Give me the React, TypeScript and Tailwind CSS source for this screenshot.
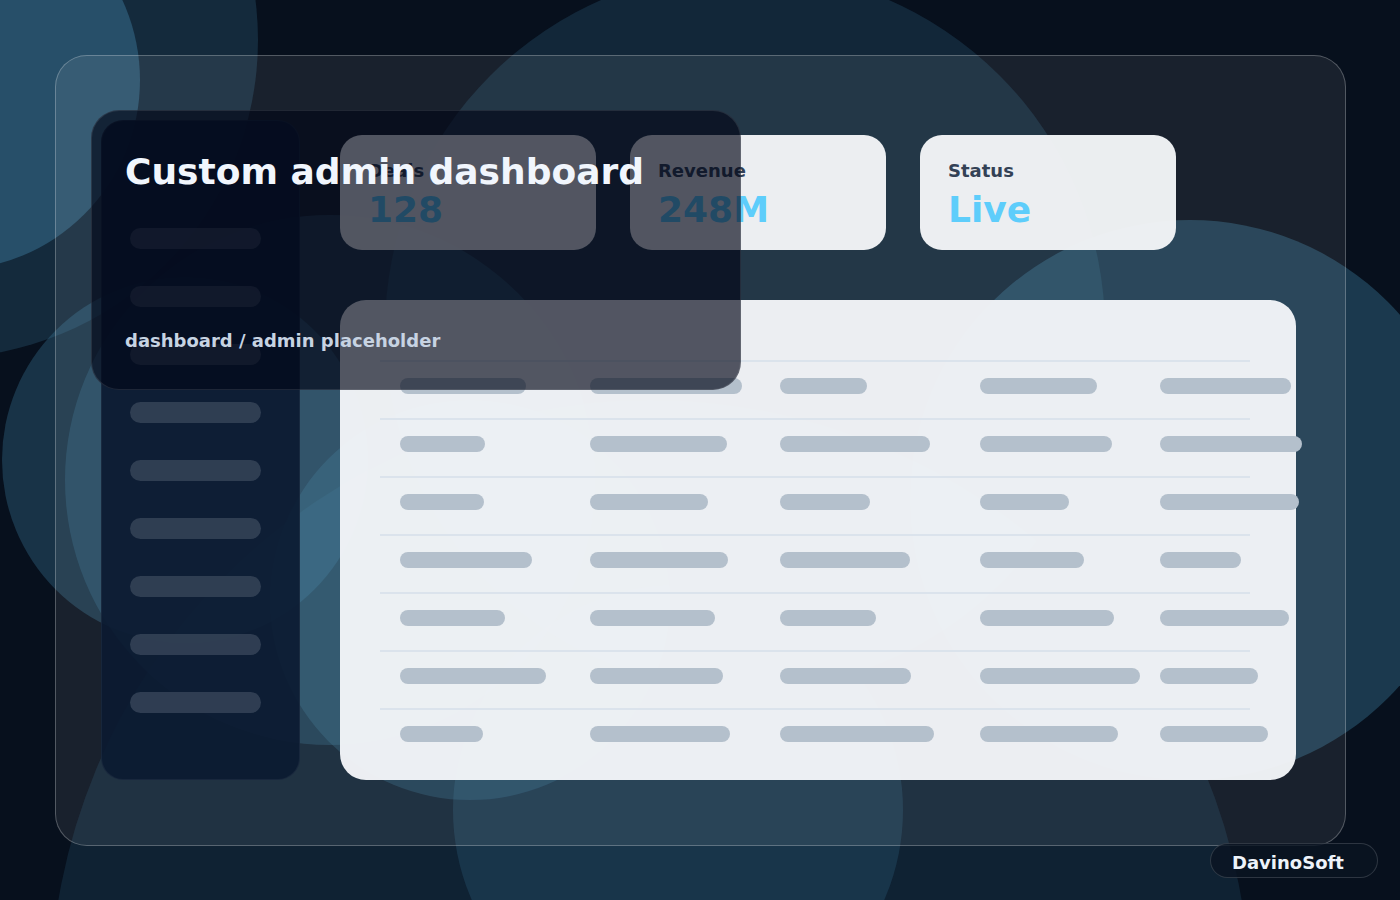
import React from 'react'

const font = { fontFamily: '"DejaVu Sans", "Liberation Sans", sans-serif' }

const stats = [
  { label: 'Deals', value: '128' },
  { label: 'Revenue', value: '248M' },
  { label: 'Status', value: 'Live' },
]

// widths of the skeleton bars, one array per row, five columns
const rows = [
  [126, 152, 87, 117, 131],
  [85, 137, 150, 132, 142],
  [84, 118, 90, 89, 139],
  [132, 138, 130, 104, 81],
  [105, 125, 96, 134, 129],
  [146, 133, 131, 160, 98],
  [83, 140, 154, 138, 108],
]

const blobs = [
  { cx: 650, cy: 1000, r: 600, o: 0.17 },
  { cx: -60, cy: 40, r: 318, o: 0.24 },
  { cx: -50, cy: 80, r: 190, o: 0.45 },
  { cx: 745, cy: 330, r: 360, o: 0.22 },
  { cx: 1190, cy: 500, r: 280, o: 0.38 },
  { cx: 185, cy: 460, r: 183, o: 0.33 },
  { cx: 330, cy: 480, r: 265, o: 0.28 },
  { cx: 470, cy: 600, r: 200, o: 0.28 },
  { cx: 678, cy: 810, r: 225, o: 0.22 },
]

function Backdrop() {
  return (
    <svg className="absolute inset-0" width="1400" height="900" viewBox="0 0 1400 900">
      <rect width="1400" height="900" fill="#07101d" />
      {blobs.map((b, i) => (
        <circle key={i} cx={b.cx} cy={b.cy} r={b.r} fill="#3d7d9f" fillOpacity={b.o} />
      ))}
    </svg>
  )
}

function StatCard({ label, value }: { label: string; value: string }) {
  return (
    <div className="w-[256px] h-[115px] rounded-[22px] bg-[#f3f5f7]/[0.97] px-7 pt-[27px]">
      <div className="text-[18px] leading-[18px] font-bold text-[#334155]">{label}</div>
      <div className="mt-3 text-[36px] leading-[36px] font-bold text-[#5ecdfb]">{value}</div>
    </div>
  )
}

export default function App() {
  return (
    <div className="relative w-[1400px] h-[900px] overflow-hidden" style={font}>
      <Backdrop />

      <div className="relative ml-[55px] mt-[55px] w-[1291px] h-[791px] rounded-[32px] border border-white/25 bg-white/[0.075] pl-[45px] pt-[64px]">
        <div className="flex gap-10">
          <aside className="w-[199px] h-[660px] rounded-[22px] bg-[#0b1a31]/[0.92] border border-white/5 px-[28px] pt-[107px] flex flex-col gap-[37px]">
            {Array.from({ length: 9 }).map((_, i) => (
              <div key={i} className="h-[21px] w-[131px] rounded-full bg-[#334155]/90" />
            ))}
          </aside>

          <main className="pt-[15px]">
            <div className="flex gap-[34px]">
              {stats.map((s) => (
                <StatCard key={s.label} label={s.label} value={s.value} />
              ))}
            </div>

            <div className="mt-[50px] w-[956px] h-[480px] rounded-[26px] bg-[#f3f5f8]/[0.97] pt-[60px] pl-[40px]">
              {rows.map((row, i) => (
                <div key={i} className="w-[870px]">
                  <div className="h-[2px] bg-[#dbe3ec]" />
                  <div className="flex items-start h-[56px] pl-[20px] pt-[16px]">
                    {row.map((w, j) => (
                      <div
                        key={j}
                        className={
                          j === 2 ? 'w-[200px] shrink-0' : j === 3 ? 'w-[180px] shrink-0' : 'w-[190px] shrink-0'
                        }
                      >
                        <div className="h-4 rounded-full bg-[#b4c0cc]" style={{ width: w }} />
                      </div>
                    ))}
                  </div>
                </div>
              ))}
            </div>
          </main>
        </div>

        <div className="absolute left-[35px] top-[54px] w-[650px] h-[280px] rounded-[28px] bg-[#020617]/[0.66] border border-white/10 pl-[33px] pt-[43px] pb-[39px] flex flex-col">
          <h1 className="text-[36px] leading-[36px] font-bold text-[#f1f6fd]">Custom admin dashboard</h1>
          <p className="mt-auto text-[18px] leading-[18px] font-bold text-[#c7d3e2]">dashboard / admin placeholder</p>
        </div>
      </div>

      <div className="absolute left-[1210px] top-[843px] h-[35px] w-[168px] rounded-full border border-white/15 bg-[#0a1422]/80 pl-[21px] pt-1 flex items-center">
        <span className="text-[18px] leading-[18px] font-bold text-[#eef3fa]">DavinoSoft</span>
      </div>
    </div>
  )
}
